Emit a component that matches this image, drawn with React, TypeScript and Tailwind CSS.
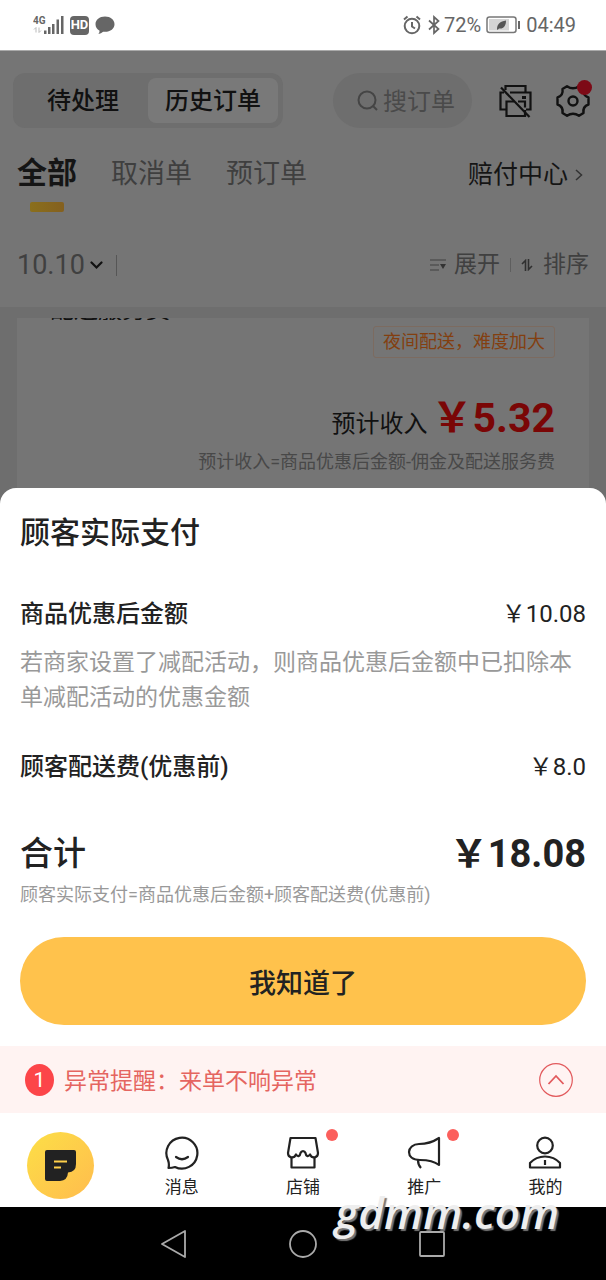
import type { ReactNode } from "react";

const CJK = "font-['Roboto','Noto_Sans_CJK_SC',sans-serif]";

function StatusBar() {
  return (
    <header className="flex h-[50px] items-center justify-between bg-white pr-[30px] pl-[33px] text-[#666]">
      <div className="flex items-center gap-[6px]">
        <svg width="31" height="20" viewBox="0 0 31 20" fill="#666" aria-hidden="true">
          <text x="0" y="9" fontSize="10" fontWeight="700" fontFamily="Roboto, sans-serif">4G</text>
          <path d="M3 12.500v5M1 14.500l2-2M6 12.500v5l2-2" stroke="#bbb" fill="none" />
          <path d="M11 15.500h2.500V19H11zM15 12h2.500v7H15zM19 9h2.500v10H19zM23.500 4.500H26V19h-2.500zM28 1h2.500v18H28z" />
        </svg>
        <span className="flex h-[19px] w-[19px] items-center justify-center rounded bg-[#666] text-[13px] font-bold text-white">HD</span>
        <svg width="20" height="19" viewBox="0 0 20 19" fill="#666" aria-hidden="true">
          <path d="M10 .5c5.500 0 9.500 3.300 9.500 7.700s-4 7.600-9.500 7.600c-.7 0-1.300 0-1.900-.1-1.300 1.200-2.900 2-4.700 2.400.8-1 1.200-2.200 1.200-3.300C2 13.400.5 11 .5 8.200.5 3.800 4.500.5 10 .5z" />
        </svg>
      </div>
      <div className="flex items-center text-[20px] leading-6">
        <svg width="18" height="20" viewBox="0 0 18 20" fill="none" stroke="#666" strokeWidth="2" aria-hidden="true">
          <circle cx="9" cy="11" r="7.300" />
          <path d="M9 7v4.500l3 2M1 4.500L4.500 1.500M17 4.500l-3.500-3" />
        </svg>
        <svg className="ml-[7px]" width="12" height="20" viewBox="0 0 12 20" fill="none" stroke="#666" strokeWidth="1.700" aria-hidden="true">
          <path d="M1 5.500l9.500 8.500L6 18V2l4.500 4L1 14.500" />
        </svg>
        <span className="ml-1">72%</span>
        <svg className="mx-[5px]" width="35" height="18" viewBox="0 0 35 18" fill="none" aria-hidden="true">
          <rect x="1" y="1" width="29" height="15.500" rx="2.500" stroke="#777" strokeWidth="1.500" />
          <path d="M3 3h20v11.500H3z" fill="#d4d4d4" />
          <path d="M11 13c0-5 3-7.500 9-8.500 0 5-2 8.500-7 8l-1.500 1.500z" fill="#555" />
          <path d="M33 5v8" stroke="#666" strokeWidth="2" />
        </svg>
        <span>04:49</span>
      </div>
    </header>
  );
}

function TopTools() {
  return (
    <div className="flex h-[55px] items-center">
      <div className="flex h-full w-[270px] items-center rounded-xl bg-[#6e6e6e] p-[5px] text-[24px] font-medium text-[#111]">
        <button className="h-full flex-1">待处理</button>
        <button className="h-full w-[130px] rounded-lg bg-[#797979]">历史订单</button>
      </div>
      <label className="ml-auto flex h-full w-[139px] items-center gap-1 rounded-full bg-[#6e6e6e] pl-6">
        <svg className="shrink-0" width="22" height="22" viewBox="0 0 22 22" fill="none" stroke="#454545" strokeWidth="2" aria-hidden="true">
          <circle cx="10" cy="10" r="8.500" />
          <path d="M16 16l4 4" />
        </svg>
        <input type="text" placeholder="搜订单" aria-label="搜订单" className="h-full w-full min-w-0 bg-transparent pt-[2px] text-[24px] outline-none placeholder:text-[#4a4a4a]" />
      </label>
      <button aria-label="打印机" className="ml-[27px]">
        <svg width="33" height="34" viewBox="0 0 33 34" fill="none" stroke="#111" strokeWidth="2.200">
          <path d="M6.500 6V2h20v6.500M11 8.500h20.500v17H27" />
          <path d="M5 8.500H1.500v17H7M15 17.500H7.500V32H26V26M19 17.500h7v6" />
          <path d="M23 13.500h4" strokeWidth="3" />
          <path d="M2 3.500L30.500 33" />
        </svg>
      </button>
      <button aria-label="设置" className="relative ml-[24px]">
        <svg width="34" height="34" viewBox="0 0 34 34" fill="none" stroke="#111" strokeWidth="2.400" strokeLinejoin="round">
          <path d="M11 2.200Q17 6.500 23 2.200L27.500 5Q26.500 11.500 32.500 13.500V20.500Q26.500 22.500 27.500 29L23 31.800Q17 27.500 11 31.800L6.500 29Q7.500 22.500 1.500 20.500V13.500Q7.500 11.500 6.500 5Z" />
          <circle cx="17" cy="17" r="4.500" />
        </svg>
        <span className="absolute -top-1 -right-0.5 h-[15px] w-[15px] rounded-full bg-[#7d0a16]" />
      </button>
    </div>
  );
}

function OrdersPage() {
  return (
    <section className="bg-[#757575]">
      <div className="border-t border-[#aaa] pt-[22px] pr-4 pl-[13px]">
        <TopTools />
      </div>
      <nav className="flex items-baseline gap-[34px] pt-[25px] pr-[23px] pl-[17px] leading-10 text-[#3f3f3f]">
        <a href="#all" className="flex flex-col items-center gap-[9px] text-[30px] font-bold text-[#151515]">
          全部
          <span className="h-[10px] w-[34px] rounded-[2px] bg-linear-to-r from-[#8a6f1c] to-[#84601f]" />
        </a>
        <a href="#cancelled" className="text-[27px]">取消单</a>
        <a href="#preorder" className="text-[27px]">预订单</a>
        <a href="#claims" className="ml-auto flex items-center gap-[7px] text-[25px] text-[#151515]">
          赔付中心
          <svg width="8" height="12" viewBox="0 0 8 12" fill="none" stroke="#333" strokeWidth="1.500"><path d="M1 1l5.500 5L1 11" /></svg>
        </a>
      </nav>
      <div className="flex items-center justify-between px-[17px] pt-[37px] pb-[26px] leading-8 text-[#404040]">
        <div className="flex items-center">
          <button className="flex items-center gap-[5px] text-[27px]">
            10.10
            <svg width="13" height="9" viewBox="0 0 13 9" fill="none" stroke="#111" strokeWidth="2.200" strokeLinecap="round"><path d="M1.500 1.500l5 5 5-5" /></svg>
          </button>
          <span className="ml-[13px] h-[21px] w-px bg-[#565656]" />
        </div>
        <div className="flex items-center text-[23px]">
          <button className="flex items-center gap-[7px]">
            <svg width="17" height="12" viewBox="0 0 17 12" fill="none" stroke="#404040" strokeWidth="1.200">
              <path d="M0 1h16M0 6h9M0 11h9" /><path d="M10 5h6l-3 5z" fill="#333" stroke="none" />
            </svg>
            展开
          </button>
          <span className="mx-[10px] h-[14px] w-px bg-[#5e5e5e]" />
          <button className="flex items-center gap-[10px]">
            <svg width="12" height="12" viewBox="0 0 12 12" fill="none" stroke="#303030" strokeWidth="1.600"><path d="M4.500 12V1.500L1 5M7.500 0v10.500L11 7" /></svg>
            排序
          </button>
        </div>
      </div>
      <div className="bg-[#6e6e6e] px-[17px] pt-[11px]">
        <article className="flex flex-col items-end bg-[#757575] pr-[34px] pb-[31px]">
          <div className="flex h-[2px] w-full items-end overflow-hidden pl-[33px] text-[24px] leading-[19px] text-[#111]">
            <span>配送服务费</span>
          </div>
          <span className="mt-[6px] rounded-[3px] border border-[#7c6b60] px-[9px] text-[18px] leading-[30px] text-[#833f10]">夜间配送，难度加大</span>
          <p className="mt-[34px] flex items-baseline gap-1 leading-[52px] text-[#111]">
            <span className="text-[24px]">预计收入</span>
            <strong className="text-[41px] font-bold text-[#7a0606]">￥5.32</strong>
          </p>
          <p className="text-[18px] leading-[23px] text-[#484848]">预计收入=商品优惠后金额-佣金及配送服务费</p>
        </article>
      </div>
    </section>
  );
}

function FeeRow({ label, value }: { label: string; value: string }) {
  return (
    <div className="flex items-center justify-between text-[24px] leading-8">
      <dt className="font-medium">{label}</dt>
      <dd>{value}</dd>
    </div>
  );
}

function PaymentSheet() {
  return (
    <section role="dialog" aria-labelledby="sheet-title" className="relative -mt-4 rounded-t-2xl bg-white px-5 pt-[25px] pb-[21px] text-[#222]">
      <h2 id="sheet-title" className="text-[30px] leading-10 font-medium">顾客实际支付</h2>
      <dl className="mt-[45px]">
        <FeeRow label="商品优惠后金额" value="￥10.08" />
        <dd className="mt-[15px] mb-9 text-[23px] leading-[35px] text-[#999]">
          若商家设置了减配活动，则商品优惠后金额中已扣除本单减配活动的优惠金额
        </dd>
        <FeeRow label="顾客配送费(优惠前)" value="￥8.0" />
        <div className="mt-[49px] flex items-center justify-between leading-[44px]">
          <dt className="text-[33px] font-medium">合计</dt>
          <dd className="text-[38px] font-bold">￥18.08</dd>
        </div>
      </dl>
      <p className="mt-[7px] text-[18px] leading-6 text-[#999]">顾客实际支付=商品优惠后金额+顾客配送费(优惠前)</p>
      <button className="mt-[30px] h-[88px] w-full rounded-full bg-[#ffc24c] pt-[6px] text-[27px] font-medium">我知道了</button>
    </section>
  );
}

function AlertBar() {
  return (
    <div role="alert" className="flex h-[67px] items-center bg-[#fff3f2] pr-[33px] pl-[25px] text-[23px] text-[#e56560]">
      <span className="flex h-[32px] w-[29px] items-center justify-center rounded-[50%] bg-[#fc4549] pt-[2px] text-[21px] text-white">1</span>
      <p className="ml-[10px] pt-[6px]">异常提醒：来单不响异常</p>
      <button aria-label="收起" className="ml-auto">
        <svg width="34" height="34" viewBox="0 0 34 34" fill="none" stroke="#e2595c">
          <circle cx="17" cy="17" r="16.300" strokeWidth="1.200" />
          <path d="M9.500 21l7.500-8 7.500 8" strokeWidth="1.800" />
        </svg>
      </button>
    </div>
  );
}

function NavItem({ label, href, dot, children }: { label: string; href: string; dot?: boolean; children: ReactNode }) {
  return (
    <a href={href} className="flex flex-col items-center gap-[5px] pt-[23px] text-[17px] leading-6">
      <span className="relative">
        <svg width="34" height="34" viewBox="0 0 34 34" fill="none" stroke="#222" strokeWidth="2.200" strokeLinejoin="round" aria-hidden="true">
          {children}
        </svg>
        {dot && <span className="absolute -top-[7px] -right-[18px] h-3 w-3 rounded-full bg-[#fb5f5c]" />}
      </span>
      {label}
    </a>
  );
}

function BottomNav() {
  return (
    <nav className="grid h-[94px] grid-cols-5 bg-white text-[#222]">
      <a href="#orders" aria-label="订单" className="mt-[19px] flex h-[67px] w-[67px] items-center justify-center justify-self-center rounded-full bg-linear-to-br from-[#fcdf46] to-[#ffbc4d]">
        <svg width="31" height="31" viewBox="0 0 31 31" aria-hidden="true">
          <path d="M2 0h27q2 0 2 2v12q0 8-8 8.500Q22.500 30.500 15 31H2Q0 31 0 29V2Q0 0 2 0z" fill="#222" />
          <path d="M9 11.500h13M9 17.500h7" stroke="#ffd04a" strokeWidth="2.200" />
        </svg>
      </a>
      <NavItem label="消息" href="#messages">
        <path d="M3.500 32Q4.500 28 3 24A15.500 15.500 0 1 1 10 31Q7 32 3.500 32z" />
        <path d="M11 21q6 4.500 12 0" strokeLinecap="round" />
      </NavItem>
      <NavItem label="店铺" href="#shop" dot>
        <path d="M4.500 2h25l2.500 15c0 5-5 6-7.500 1l-3.500-2.500q-4-4-8 0L9.500 18C7 23 2 22 2 17z" stroke="none" />
        <path d="M4.500 2h25L32 17c0 5-6 6-8 1.500-2 3-4 1.500-4.500-1.500-1-2.500-4-2.500-5 0-.5 3-2.500 4.500-4.500 1.500C8 23 2 22 2 17z" />
        <path d="M5.500 21v10.500h23V21" />
      </NavItem>
      <NavItem label="推广" href="#promo" dot>
        <path d="M32 2v27c-5-4-10-5-19-5C5 24 2 20 2 16c0-4 4-8 10-8 9 0 14-2 20-6z" />
        <path d="M11 24q0 5 3 8" />
      </NavItem>
      <NavItem label="我的" href="#me">
        <circle cx="17" cy="9.500" r="7.800" />
        <path d="M2 31.500V27q6-6.500 15-6.500T32 27v4.500zM17 24v5" />
      </NavItem>
    </nav>
  );
}

function SystemNav() {
  return (
    <nav className="relative flex h-[73px] items-center justify-center gap-[101px] bg-black">
      <button aria-label="返回">
        <svg width="28" height="28" viewBox="0 0 28 28" fill="none" stroke="#aaa" strokeWidth="1.800" strokeLinejoin="round"><path d="M25 1v26L2 14z" /></svg>
      </button>
      <button aria-label="主页">
        <svg width="28" height="28" viewBox="0 0 28 28" fill="none" stroke="#aaa" strokeWidth="1.800"><circle cx="14" cy="14" r="13" /></svg>
      </button>
      <button aria-label="最近任务">
        <svg width="28" height="28" viewBox="0 0 28 28" fill="none" stroke="#aaa" strokeWidth="1.800"><rect x="2" y="2" width="24" height="24" rx="1" /></svg>
      </button>
      <span className="pointer-events-none absolute right-[47px] bottom-[38px] font-['Open_Sans',sans-serif] text-[44px] leading-[60px] font-semibold text-[#eee] italic [text-shadow:2px_2px_1px_#777]">gdmm.com</span>
    </nav>
  );
}

export default function App() {
  return (
    <div className={`${CJK} min-h-screen bg-white`}>
      <StatusBar />
      <OrdersPage />
      <PaymentSheet />
      <AlertBar />
      <BottomNav />
      <SystemNav />
    </div>
  );
}
